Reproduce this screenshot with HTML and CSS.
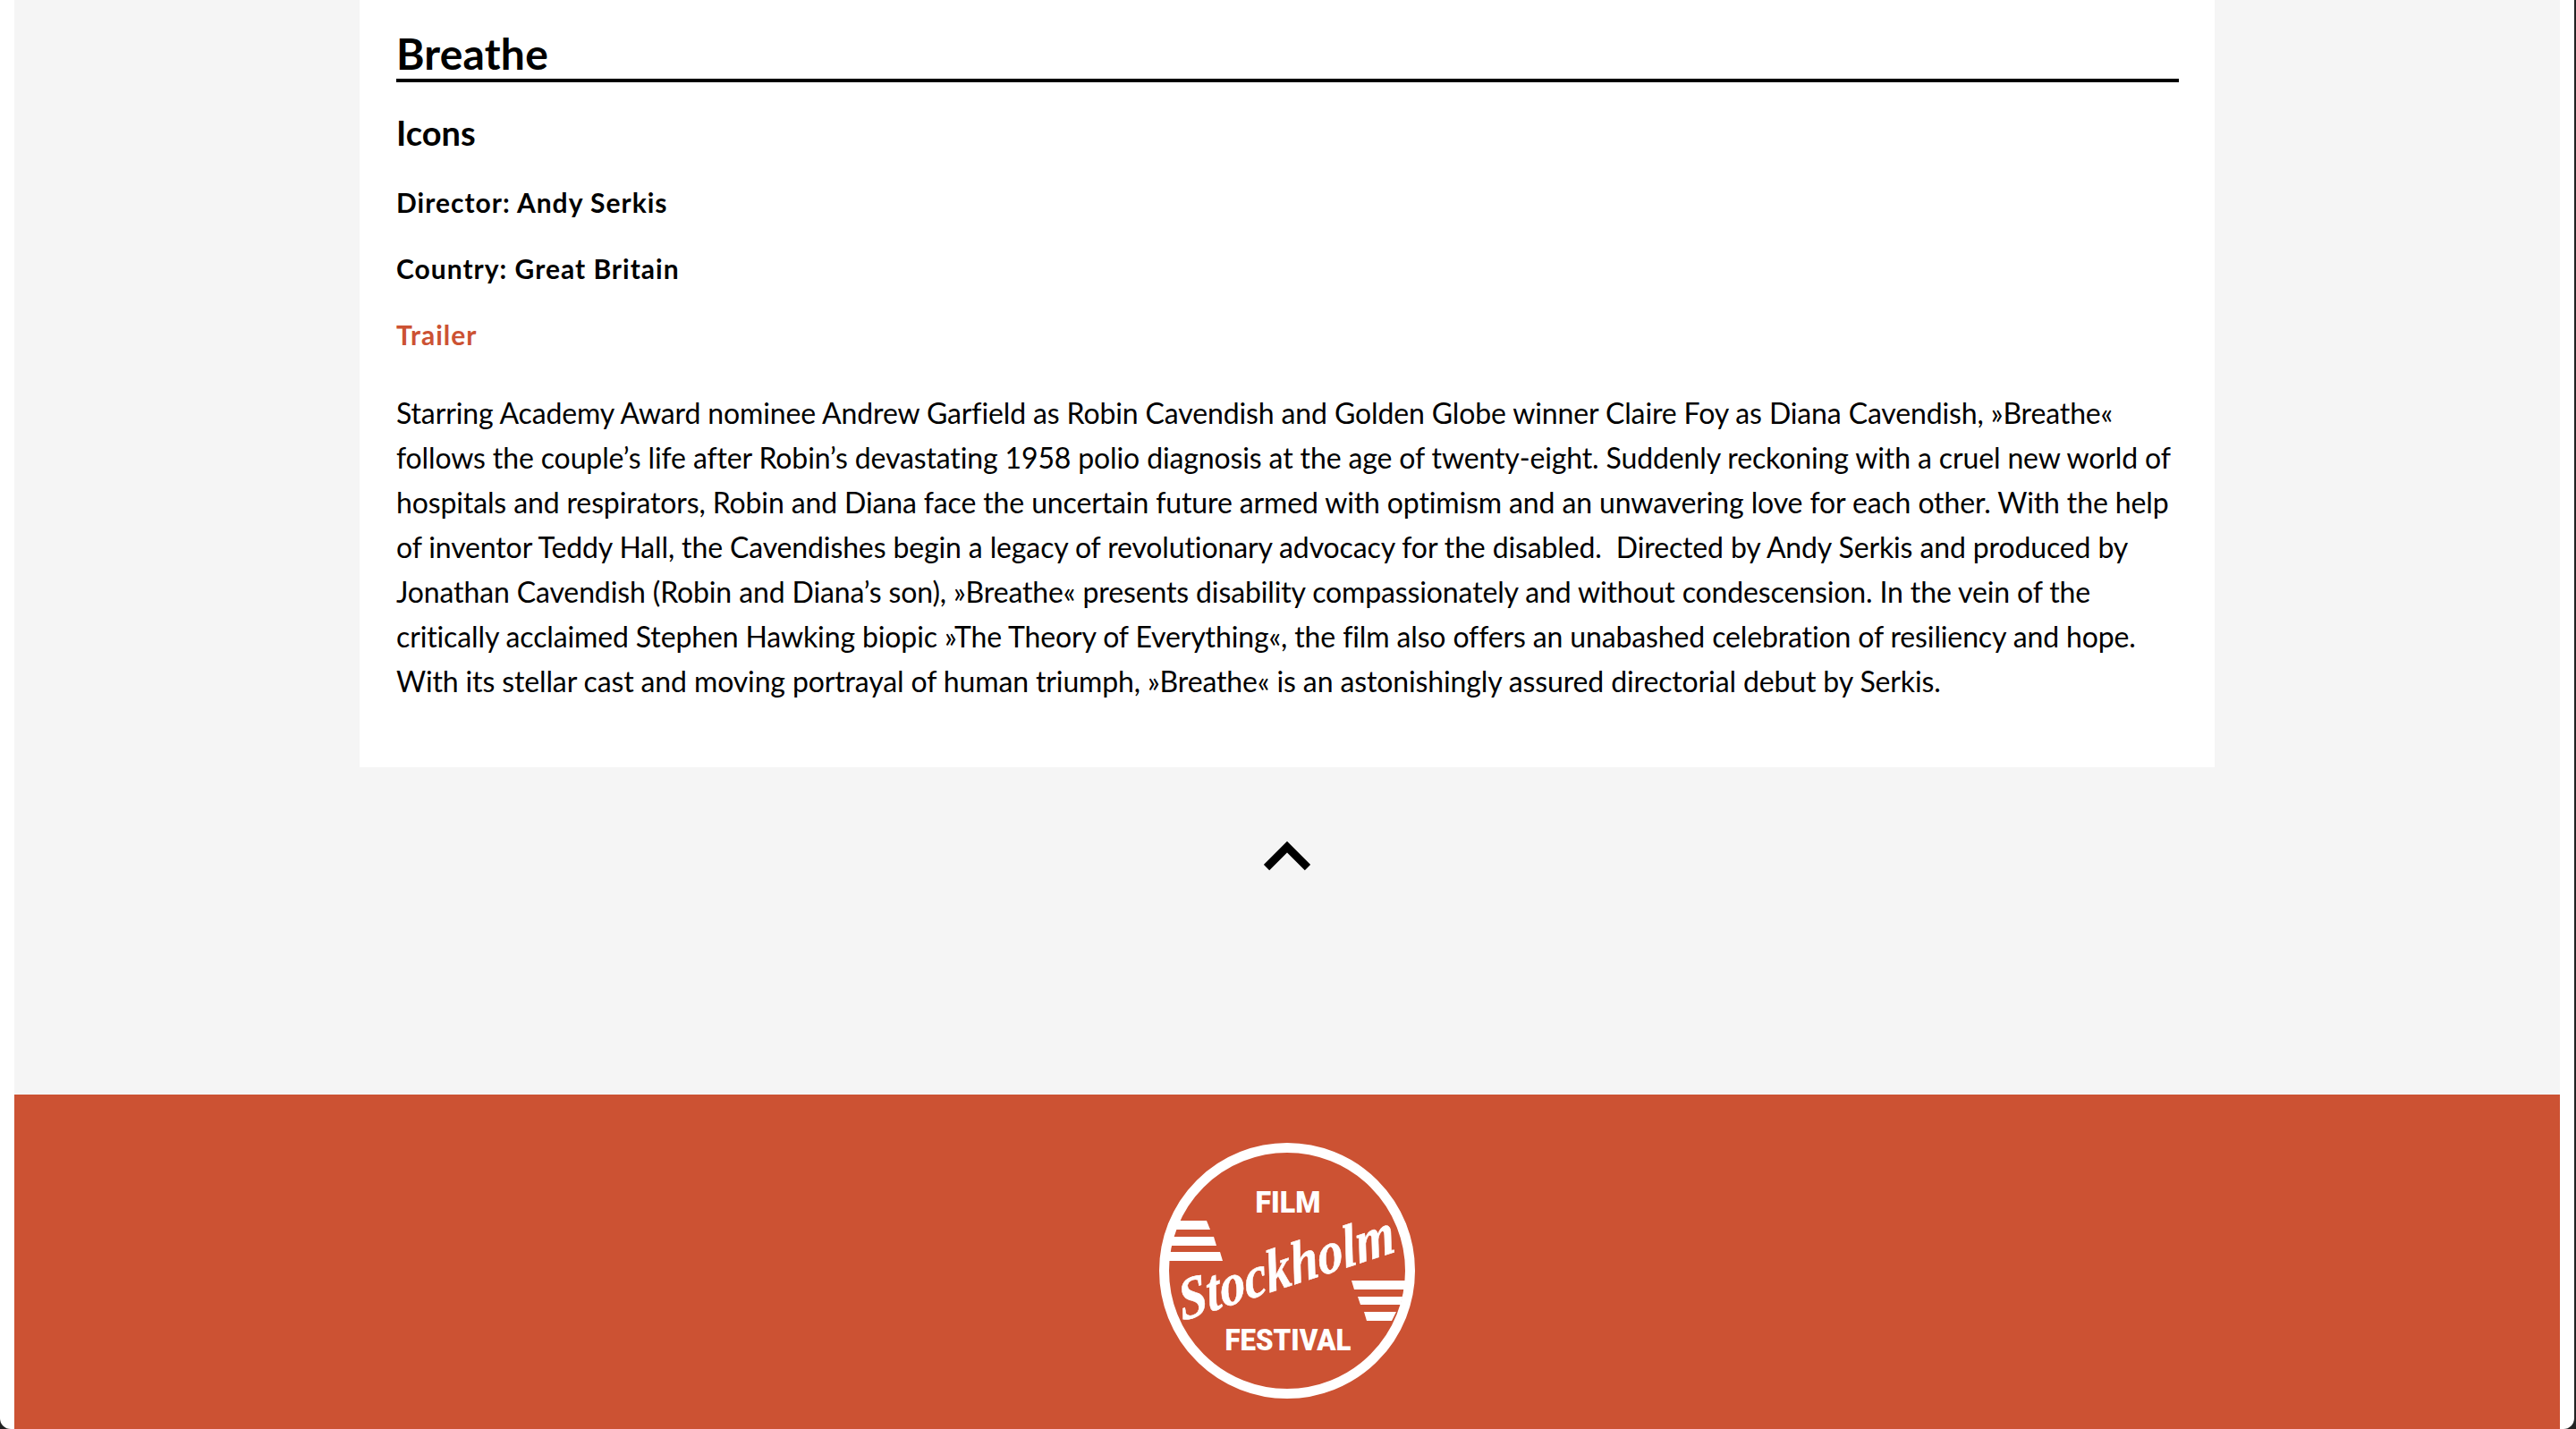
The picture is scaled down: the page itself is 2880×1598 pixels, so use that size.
FILE: index.html
```html
<!DOCTYPE html>
<html lang="en">
<head>
    <meta charset="UTF-8">
    <title>Breathe - Stockholm Film Festival</title>
    <link rel="stylesheet" href="styles.css">
</head>
<body>
    <div class="page">
        <main class="film">
            <h1>Breathe</h1>
            <h2>Icons</h2>
            <p class="meta">Director: Andy Serkis</p>
            <p class="meta">Country: Great Britain</p>
            <p class="meta"><a href="#">Trailer</a></p>
            <p class="synopsis">Starring Academy Award nominee Andrew Garfield as Robin Cavendish and Golden Globe winner Claire Foy as Diana Cavendish, »Breathe« follows the couple’s life after Robin’s devastating 1958 polio diagnosis at the age of twenty-eight. Suddenly reckoning with a cruel new world of hospitals and respirators, Robin and Diana face the uncertain future armed with optimism and an unwavering love for each other. With the help of inventor Teddy Hall, the Cavendishes begin a legacy of revolutionary advocacy for the disabled.&nbsp; Directed by Andy Serkis and produced by Jonathan Cavendish (Robin and Diana’s son), »Breathe« presents disability compassionately and without condescension. In the vein of the critically acclaimed Stephen Hawking biopic »The Theory of Everything«, the film also offers an unabashed celebration of resiliency and hope. With its stellar cast and moving portrayal of human triumph, »Breathe« is an astonishingly assured directorial debut by Serkis.</p>
        </main>

        <a class="to-top" href="#" aria-label="Back to top">
            <svg viewBox="0 0 52 34" width="52" height="34">
                <path d="M3 30 L26 7 L49 30" fill="none" stroke="#000" stroke-width="9"/>
            </svg>
        </a>

        <footer>
            <svg class="logo" viewBox="0 0 290 290" width="290" height="290">
                <circle cx="145" cy="145" r="137.5" fill="none" stroke="#fff" stroke-width="11"/>
                <polygon points="25,89 55,89 59,99 20,99" fill="#fff"/>
                <polygon points="16,107 63,107 66,117 14,117" fill="#fff"/>
                <polygon points="10,124 70,124 73,134 9,134" fill="#fff"/>
                <polygon points="217,156 281,156 279,166 220,166" fill="#fff"/>
                <polygon points="224,174 274,174 272,183 227,183" fill="#fff"/>
                <polygon points="231,191 267,191 262,201 234,201" fill="#fff"/>
                <text class="logo-caps" x="146" y="80" font-size="34" textLength="73" lengthAdjust="spacingAndGlyphs">FILM</text>
                <text class="logo-caps" x="146" y="234" font-size="34" textLength="141" lengthAdjust="spacingAndGlyphs">FESTIVAL</text>
                <text class="logo-script" x="0" y="0" font-size="66" textLength="252" lengthAdjust="spacingAndGlyphs" transform="rotate(-18 146 147) translate(143 162) skewX(-8)">Stockholm</text>
            </svg>
        </footer>
    </div>
</body>
</html>
```

FILE: styles.css
```css
html {
    height: 100%;
    overflow: hidden;
    background: #222;
}

body {
    margin: 0 2px 0 0;
    height: 100%;
    overflow: hidden;
    background: #fff;
    border-radius: 0 0 12px 12px;
}

.page {
    margin: 0 16px;
    height: 1598px;
    background: #f5f5f5;
    display: flex;
    flex-direction: column;
    color: #000;
    font-family: Lato, sans-serif;
}

.film {
    box-sizing: border-box;
    width: 2074px;
    height: 858px;
    margin: 0 auto;
    padding: 0 40px 0 41px;
    background: #fff;
}

h1 {
    margin: 0;
    height: 88px;
    border-bottom: 4px solid #000;
    font-size: 48px;
    font-weight: 700;
    line-height: 120px;
    letter-spacing: 0.2px;
    overflow: hidden;
}

h2 {
    margin: 0;
    height: 89px;
    font-size: 38px;
    font-weight: 700;
    line-height: 112px;
}

.meta {
    margin: 0;
    height: 74px;
    font-size: 30px;
    font-weight: 700;
    line-height: 90px;
    letter-spacing: 1px;
}

.meta a {
    color: #cc5233;
    text-decoration: none;
}

.synopsis {
    margin: 34px 0 0;
    font-size: 32px;
    line-height: 50px;
    letter-spacing: -0.13px;
}

.to-top {
    display: flex;
    justify-content: center;
    margin-top: 82px;
    height: 284px;
}

.to-top svg {
    display: block;
}

footer {
    flex: 1;
    display: flex;
    justify-content: center;
    padding-top: 52px;
    background: #cc5233;
}

.logo {
    display: block;
    overflow: visible;
}

.logo-caps {
    fill: #fff;
    font-family: Roboto, sans-serif;
    font-weight: 900;
    text-anchor: middle;
}

.logo-script {
    fill: #fff;
    stroke: #fff;
    stroke-width: 0.6px;
    font-family: "Liberation Serif", serif;
    font-style: italic;
    font-weight: 700;
    text-anchor: middle;
}
```
